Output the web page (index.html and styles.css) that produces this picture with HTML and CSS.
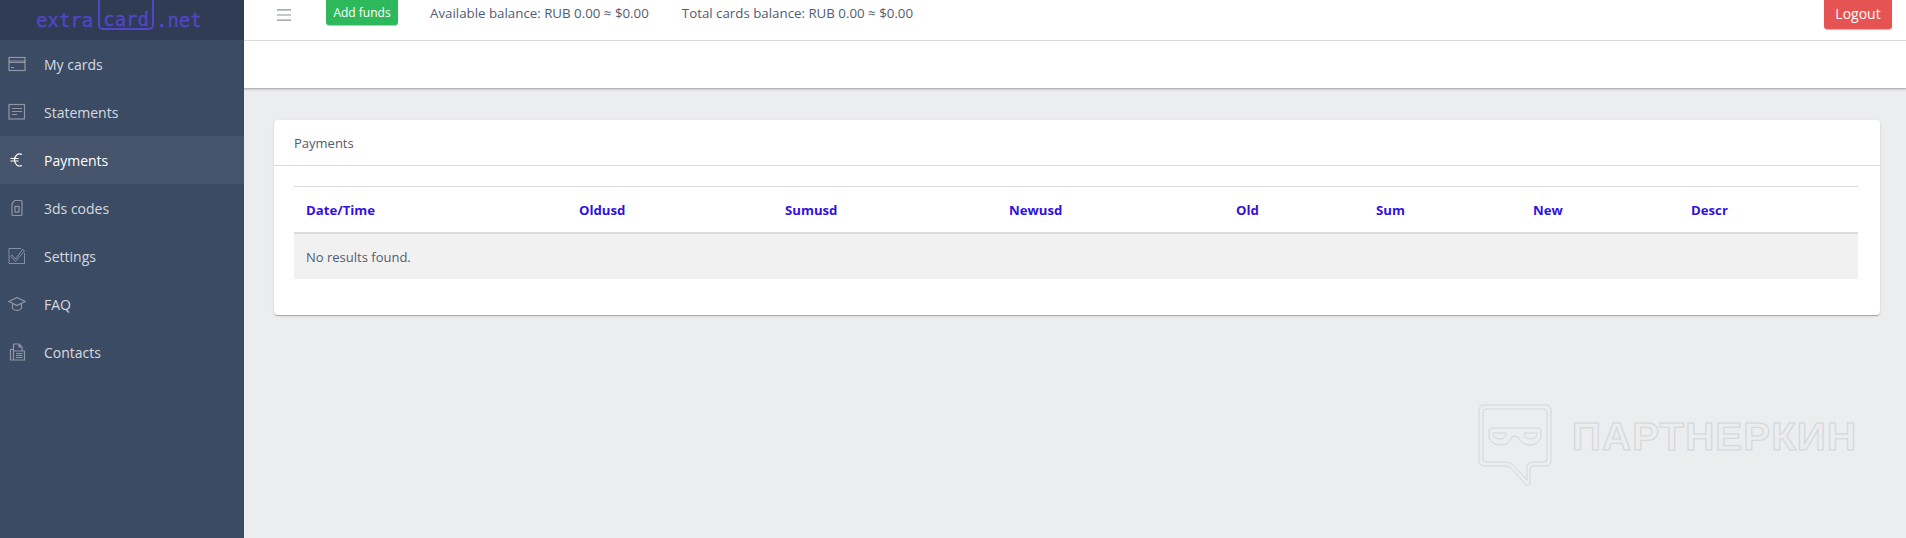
FILE: index.html
```html
<!DOCTYPE html>
<html lang="en">
<head>
<meta charset="utf-8">
<title>Payments</title>
<link rel="stylesheet" href="styles.css">
</head>
<body>
<div class="app">
  <aside class="sidebar">
    <div class="brand">
      <span class="brand-text">extra</span><span class="brand-box">card</span><span class="brand-text">.net</span>
    </div>
    <nav class="nav">
      <a class="nav-item"><svg class="nav-icon" viewBox="0 0 18 18"><rect x="1" y="2.500" width="16" height="13"/><path d="M1 6h16M1 7.500h16M3 12.500h3"/></svg>My cards</a>
      <a class="nav-item"><svg class="nav-icon" viewBox="0 0 18 18"><rect x="1" y="1.500" width="15.500" height="14.500"/><path d="M4 5.500h10M4 8.500h10M4 11.500h5"/></svg>Statements</a>
      <a class="nav-item active"><svg class="nav-icon" viewBox="0 0 18 18"><path d="M14 3.500c-4-1.800-7 .5-7.500 5.500.5 5 3.500 7 7.500 5.500M2.500 7.500h8M2.500 10h8"/></svg>Payments</a>
      <a class="nav-item"><svg class="nav-icon" viewBox="0 0 18 18"><path d="M6.500 1.500h6.500a1 1 0 0 1 1 1v13a1 1 0 0 1-1 1H5a1 1 0 0 1-1-1V5z"/><rect x="7" y="7.500" width="4" height="5.500"/></svg>3ds codes</a>
      <a class="nav-item"><svg class="nav-icon nav-icon-thin" viewBox="0 0 18 18"><path d="M16.500 6v10.500H1V1.500h12"/><path d="M4 8l3.500 4L14.500 2.500l2 1.300L7.500 14.500 3 9.500z"/></svg>Settings</a>
      <a class="nav-item"><svg class="nav-icon" viewBox="0 0 18 18"><path d="M9 2.500l8 4-8 4-8-4zM4.500 9v4.500c2 2.500 7 2.500 9 0V9"/></svg>FAQ</a>
      <a class="nav-item"><svg class="nav-icon" viewBox="0 0 18 18"><path d="M5.500 8V1h5.500l3 3v4M11 1v3h3M5.500 6.500H2.500v10.500h14V8h-11M5.500 6.500V17M8 10.500h6.500M8 12.500h6.500M8 14.500h6.500"/></svg>Contacts</a>
    </nav>
  </aside>
  <main class="main">
    <header class="topbar">
      <svg class="burger" viewBox="0 0 16 14"><path d="M0 1.500h15M0 7h15M0 12.500h15"/></svg>
      <a class="btn btn-green">Add funds</a>
      <span class="balance balance-first">Available balance: RUB 0.00 ≈ $0.00</span>
      <span class="balance">Total cards balance: RUB 0.00 ≈ $0.00</span>
      <a class="btn btn-red">Logout</a>
    </header>
    <div class="subbar"></div>
    <section class="content">
      <div class="card">
        <div class="card-header">Payments</div>
        <div class="card-body">
          <table class="grid">
            <colgroup>
              <col class="c1"><col class="c2"><col class="c3"><col class="c4"><col class="c5"><col class="c6"><col class="c7"><col class="c8">
            </colgroup>
            <thead>
              <tr><th>Date/Time</th><th>Oldusd</th><th>Sumusd</th><th>Newusd</th><th>Old</th><th>Sum</th><th>New</th><th>Descr</th></tr>
            </thead>
            <tbody>
              <tr><td colspan="8">No results found.</td></tr>
            </tbody>
          </table>
        </div>
      </div>
    </section>
  </main>
</div>
<div class="watermark">
  <svg class="wm-icon" viewBox="0 0 74 82"><path class="wm-line" d="M6 1h62a5 5 0 0 1 5 5v51a5 5 0 0 1-5 5h-13a3 3 0 0 0-3 3v14a2.500 2.500 0 0 1-4.500 1.500L36 67c-3-3-6-5-10-5H6a5 5 0 0 1-5-5V6a5 5 0 0 1 5-5z"/><path class="wm-line" d="M8 5h58a3 3 0 0 1 3 3v47a3 3 0 0 1-3 3H55c-4 0-6 3-6 6v12L38 64c-3-4-7-6-12-6H8a3 3 0 0 1-3-3V8a3 3 0 0 1 3-3z"/><path class="wm-line" d="M14 24h46a3 3 0 0 1 3 3v4c0 6-5 10-11 10-6 0-10-3-12-8-1-1-5-1-6 0-2 5-6 8-12 8-6 0-11-4-11-10v-4a3 3 0 0 1 3-3z"/><path class="wm-line" d="M15 29h13c0 4-3 6-6.500 6S15 33 15 29zM46 29h13c0 4-3 6-6.500 6S46 33 46 29z"/></svg>
  <span class="wm-text">ПАРТНЕРКИН</span>
</div>
</body>
</html>
```
FILE: styles.css
```css
* { box-sizing: border-box; }
html, body { margin: 0; height: 100%; }
body {
  background: #ebedef;
  color: #4f5d73;
  font-family: "Open Sans", "Noto Sans", "Liberation Sans", sans-serif;
  font-size: 13px;
  overflow: hidden;
}
.app { display: flex; height: 538px; }
.sidebar { width: 244px; flex: none; background: #3c4b64; color: rgba(255,255,255,.8); }
.brand {
  height: 40px;
  background: #303c54;
  overflow: hidden;
  display: flex;
  align-items: flex-end;
  padding: 0 0 11px 36px;
  font-family: "DejaVu Sans Mono", monospace;
  font-size: 19px;
  line-height: 18px;
  color: #4f46c9;
  -webkit-text-stroke: .3px #4f46c9;
}
.brand-box {
  border: 2px solid #4f46c9;
  border-top: 0;
  border-radius: 0 0 5px 5px;
  margin: -20px 2px -1px 5px;
  padding: 20px 3px 0;
  height: 40px;
}
.nav-item {
  height: 48px;
  display: flex;
  align-items: center;
  font-size: 14px;
  padding-left: 8px;
}
.nav-item.active { background: #46546c; color: #fff; }
.nav-icon {
  width: 18px;
  height: 18px;
  margin-right: 18px;
  fill: none;
  stroke: rgba(255,255,255,.42);
  stroke-width: 1.200;
  flex: none;
}
.nav-icon-thin { stroke-width: .9; }
.active .nav-icon { stroke: #fff; }
.main { flex: 1; min-width: 0; display: flex; flex-direction: column; }
.topbar {
  height: 41px;
  background: #fff;
  border-bottom: 1px solid #d8dbe0;
  display: flex;
  align-items: flex-start;
  padding: 0 14px 0 33px;
  line-height: 26px;
}
.burger { width: 15px; height: 14px; margin-top: 8px; fill: none; stroke: #8a93a2; stroke-width: 1.200; flex: none; }
.btn {
  color: #fff;
  border-radius: 0 0 3px 3px;
  white-space: nowrap;
  box-shadow: 0 1px 1px rgba(0,0,21,.14), 0 2px 1px -1px rgba(0,0,21,.12);
}
.btn-green { background: #2eb85c; width: 72px; height: 25px; margin-left: 34px; font-size: 12px; line-height: 26px; text-align: center; }
.btn-red { background: #e55353; width: 68px; height: 29px; margin-left: auto; font-size: 14px; line-height: 27px; text-align: center; }
.balance { margin-left: 33px; white-space: nowrap; font-size: 13.300px; }
.balance-first { margin-left: 32px; }
.subbar { height: 47px; background: #fff; box-shadow: 0 2px 2px rgba(0,0,21,.14), 0 1px 1px rgba(0,0,21,.12); }
.content { padding: 32px 26px 0 30px; }
.card { background: #fff; border-radius: 4px; box-shadow: 0 1px 1px rgba(0,0,21,.14), 0 2px 1px -1px rgba(0,0,21,.12), 0 1px 3px rgba(0,0,21,.1); }
.card-header { height: 46px; padding: 1px 20px 0; line-height: 45px; border-bottom: 1px solid #d8dbe0; }
.card-body { padding: 20px 22px 36px 20px; }
.grid { width: 100%; table-layout: fixed; border-collapse: collapse; border-top: 1px solid #d8dbe0; }
.c1 { width: 273px; } .c2 { width: 206px; } .c3 { width: 224px; } .c4 { width: 227px; }
.c5 { width: 140px; } .c6 { width: 157px; } .c7 { width: 158px; } .c8 { width: 179px; }
.grid th { height: 46px; padding: 2px 12px 0; text-align: left; font-size: 13.200px; font-weight: 700; color: #3311dd; border-bottom: 2px solid #d8dbe0; }
.grid td { height: 46px; padding: 2px 12px 0; background: #f2f1f2; font-size: 13px; }
.watermark { position: absolute; left: 1478px; top: 404px; display: flex; align-items: flex-start; }
.wm-icon { width: 74px; height: 82px; fill: none; flex: none; }
.wm-line { stroke: #d3d5d8; stroke-width: 1; }
.wm-text {
  margin: 14px 0 0 20px;
  font-family: "Liberation Sans", sans-serif;
  font-weight: 700;
  font-size: 38px;
  line-height: 38px;
  letter-spacing: 1px;
  color: transparent;
  -webkit-text-stroke: 1px #d3d5d8;
  transform: scaleX(1.060);
  transform-origin: left;
  white-space: nowrap;
}
```
